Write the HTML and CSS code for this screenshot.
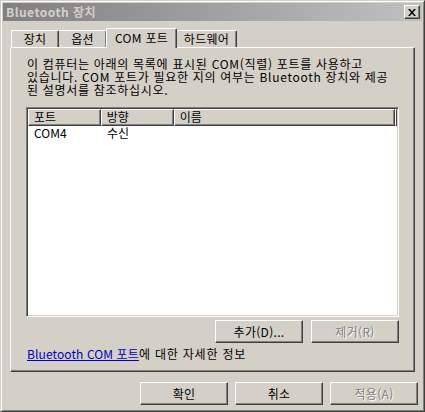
FILE: index.html
```html
<!DOCTYPE html>
<html lang="ko">
<head>
    <meta charset="UTF-8">
    <title>Bluetooth 장치</title>
    <link rel="stylesheet" href="styles.css">
</head>
<body>
    <div class="window">
        <div class="titlebar">
            <span class="title">Bluetooth 장치</span>
            <button class="close-btn" aria-label="닫기">
                <svg width="8" height="7" viewBox="0 0 8 7">
                    <path d="M0 0h2l2 2.5L6 0h2L5 3.5 8 7H6L4 4.5 2 7H0l3-3.5z" fill="#000"/>
                </svg>
            </button>
        </div>

        <div class="content">
            <div class="tabs">
                <div class="tab tab-1">장치</div>
                <div class="tab tab-2">옵션</div>
                <div class="tab tab-active">COM 포트</div>
                <div class="tab tab-4">하드웨어</div>
            </div>

            <div class="panel">
                <p class="desc">이 컴퓨터는 아래의 목록에 표시된 COM(직렬) 포트를 사용하고<br>있습니다. COM 포트가 필요한 지의 여부는 Bluetooth 장치와 제공<br>된 설명서를 참조하십시오.</p>

                <div class="list">
                    <div class="list-head">
                        <div class="col col-port">포트</div>
                        <div class="col col-dir">방향</div>
                        <div class="col col-name">이름</div>
                        <div class="col col-rest"></div>
                    </div>
                    <div class="list-row">
                        <div class="cell col-port">COM4</div>
                        <div class="cell col-dir">수신</div>
                        <div class="cell col-name"></div>
                    </div>
                </div>

                <div class="list-buttons">
                    <button class="btn">추가(D)...</button>
                    <button class="btn" disabled>제거(R)</button>
                </div>

                <p class="info"><a href="#">Bluetooth COM 포트</a>에 대한 자세한 정보</p>
            </div>

            <div class="dialog-buttons">
                <button class="btn">확인</button>
                <button class="btn">취소</button>
                <button class="btn" disabled>적용(A)</button>
            </div>
        </div>
    </div>
</body>
</html>
```

FILE: styles.css
```css
* {
    box-sizing: border-box;
}

body {
    margin: 0;
    width: 425px;
    height: 412px;
    background: #d4d0c8;
    font-family: "Noto Sans CJK KR", "DejaVu Sans", sans-serif;
    font-size: 12px;
    color: #000;
    overflow: hidden;
}

.window {
    width: 425px;
    height: 412px;
    border: 1px solid;
    border-color: #d4d0c8 #404040 #404040 #d4d0c8;
    box-shadow: inset 1px 1px #fff, inset -1px -1px #808080;
    padding: 2px;
    display: flex;
    flex-direction: column;
}

/* title bar (inactive) */
.titlebar {
    height: 18px;
    background: linear-gradient(to right, #808080, #c0c0c0);
    display: flex;
    align-items: center;
    justify-content: space-between;
    padding: 0 2px 0 3px;
}

.title {
    color: #d4d0c8;
    font-weight: bold;
    font-size: 12px;
    line-height: 18px;
    letter-spacing: 0.5px;
}

.close-btn {
    width: 16px;
    height: 14px;
    padding: 0;
    background: #d4d0c8;
    border: 1px solid;
    border-color: #fff #404040 #404040 #fff;
    box-shadow: inset -1px -1px #808080;
    display: flex;
    align-items: center;
    justify-content: center;
}

.content {
    flex: 1;
    padding: 7px 0 0 7px;
    display: flex;
    flex-direction: column;
}

/* tabs */
.tabs {
    display: flex;
    align-items: flex-end;
    height: 19px;
    padding-left: 1px;
}

.tab {
    height: 17px;
    line-height: 15px;
    text-align: center;
    border-top: 1px solid #fff;
    border-left: 1px solid #fff;
    border-right: 1px solid #404040;
    box-shadow: inset -1px 0 #808080;
    border-radius: 2px 2px 0 0;
    white-space: nowrap;
    letter-spacing: 0.3px;
}

.tab-1 {
    width: 48px;
}

.tab-2 {
    width: 48px;
    border-left: none;
}

.tab-active {
    width: 71px;
    height: 20px;
    margin-bottom: -1px;
    margin-left: -1px;
    line-height: 17px;
    background: #d4d0c8;
    position: relative;
    z-index: 1;
}

.tab-4 {
    width: 60px;
    border-left: none;
}

/* tab page */
.panel {
    width: 405px;
    height: 325px;
    border: 1px solid;
    border-color: #fff #404040 #404040 #fff;
    box-shadow: inset -1px -1px #808080;
    padding: 9px 0 0 15px;
}

.desc {
    margin: 0 0 0 1px;
    line-height: 13px;
    white-space: nowrap;
    letter-spacing: 0.7px;
}

.list {
    margin-top: 11px;
    width: 373px;
    height: 210px;
    background: #fff;
    border: 1px solid;
    border-color: #808080 #fff #fff #808080;
    box-shadow: inset 1px 1px #404040, inset -1px -1px #d4d0c8;
    padding: 1px;
}

.list-head {
    display: flex;
    height: 17px;
}

.col {
    background: #d4d0c8;
    border: 1px solid;
    border-color: #fff #404040 #404040 #fff;
    box-shadow: inset -1px -1px #808080;
    line-height: 14px;
    padding-left: 5px;
}

.col-port {
    width: 73px;
}

.col-dir {
    width: 73px;
}

.col-name {
    width: 222px;
}

.col-rest {
    flex: 1;
    padding: 0;
}

.list-row {
    display: flex;
    height: 14px;
    line-height: 14px;
}

.cell {
    padding-left: 6px;
}

.list-buttons {
    display: flex;
    justify-content: flex-end;
    gap: 8px;
    width: 373px;
    margin-top: 3px;
}

.btn {
    width: 88px;
    height: 23px;
    padding: 0;
    font-family: inherit;
    font-size: 12px;
    color: #000;
    background: #d4d0c8;
    border: 1px solid;
    border-color: #fff #404040 #404040 #fff;
    box-shadow: inset -1px -1px #808080;
    letter-spacing: 0.3px;
}

.btn:disabled {
    color: #808080;
    text-shadow: 1px 1px #fff;
}

.info {
    margin: 4px 0 0 1px;
    line-height: 14px;
    letter-spacing: 0.8px;
}

.info a {
    color: #0000cc;
    letter-spacing: 0.1px;
}

.dialog-buttons {
    display: flex;
    justify-content: flex-end;
    gap: 7px;
    margin-top: 10px;
    padding-right: 4px;
}
```
